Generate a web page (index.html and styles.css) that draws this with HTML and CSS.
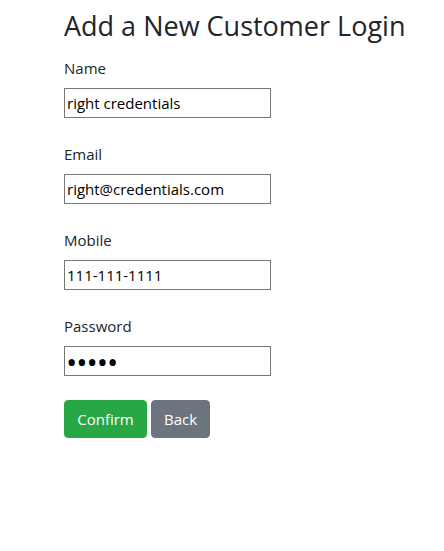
FILE: index.html
```html
<!DOCTYPE html>
<html>
<head>
<meta charset="utf-8">
<link rel="stylesheet" href="styles.css">
</head>
<body>
<main class="page">
  <h3 class="title">Add a New Customer Login</h3>
  <form class="form">
    <div class="group">
      <label class="label">Name</label>
      <input class="field" type="text" value="right credentials">
    </div>
    <div class="group">
      <label class="label">Email</label>
      <input class="field" type="text" value="right@credentials.com">
    </div>
    <div class="group">
      <label class="label">Mobile</label>
      <input class="field" type="text" value="111-111-1111">
    </div>
    <div class="group">
      <label class="label">Password</label>
      <input class="field field-pass" type="password" value="abcde">
    </div>
    <div class="actions">
      <button type="button" class="btn btn-green">Confirm</button>
      <button type="button" class="btn btn-gray">Back</button>
    </div>
  </form>
</main>
</body>
</html>
```
FILE: styles.css
```css
html, body {
  margin: 0;
  padding: 0;
  background: #fff;
}
body {
  font-family: "Open Sans", "Noto Sans", sans-serif;
  color: #212529;
  font-size: 15px;
}
.page {
  padding: 8px 0 0 64px;
}
.title {
  margin: 0 0 12px 0;
  font-size: 27px;
  font-weight: 400;
  line-height: 36px;
}
.form {
  display: flex;
  flex-direction: column;
}
.group {
  display: flex;
  flex-direction: column;
  align-items: flex-start;
  margin-bottom: 24px;
}
.label {
  line-height: 24px;
  margin-bottom: 8px;
}
.field {
  box-sizing: border-box;
  width: 207px;
  height: 30px;
  margin: 0;
  border: 1px solid #767676;
  padding: 1px 2px;
  font-family: "Open Sans", "Noto Sans", sans-serif;
  font-size: 15px;
  color: #000;
  outline: none;
}
.field-pass {
  font-size: 30px;
  padding: 0 1px;
  letter-spacing: -1px;
}
.actions {
  display: flex;
  gap: 4px;
}
.btn {
  box-sizing: border-box;
  height: 38px;
  border: 1px solid transparent;
  border-radius: 4px;
  padding: 0 12px;
  font-family: "Open Sans", "Noto Sans", sans-serif;
  font-size: 15px;
  color: #fff;
  line-height: 36px;
}
.btn-green {
  background: #28a745;
  border-color: #28a745;
  width: 83px;
}
.btn-gray {
  background: #6c757d;
  border-color: #6c757d;
  width: 59px;
}
```
